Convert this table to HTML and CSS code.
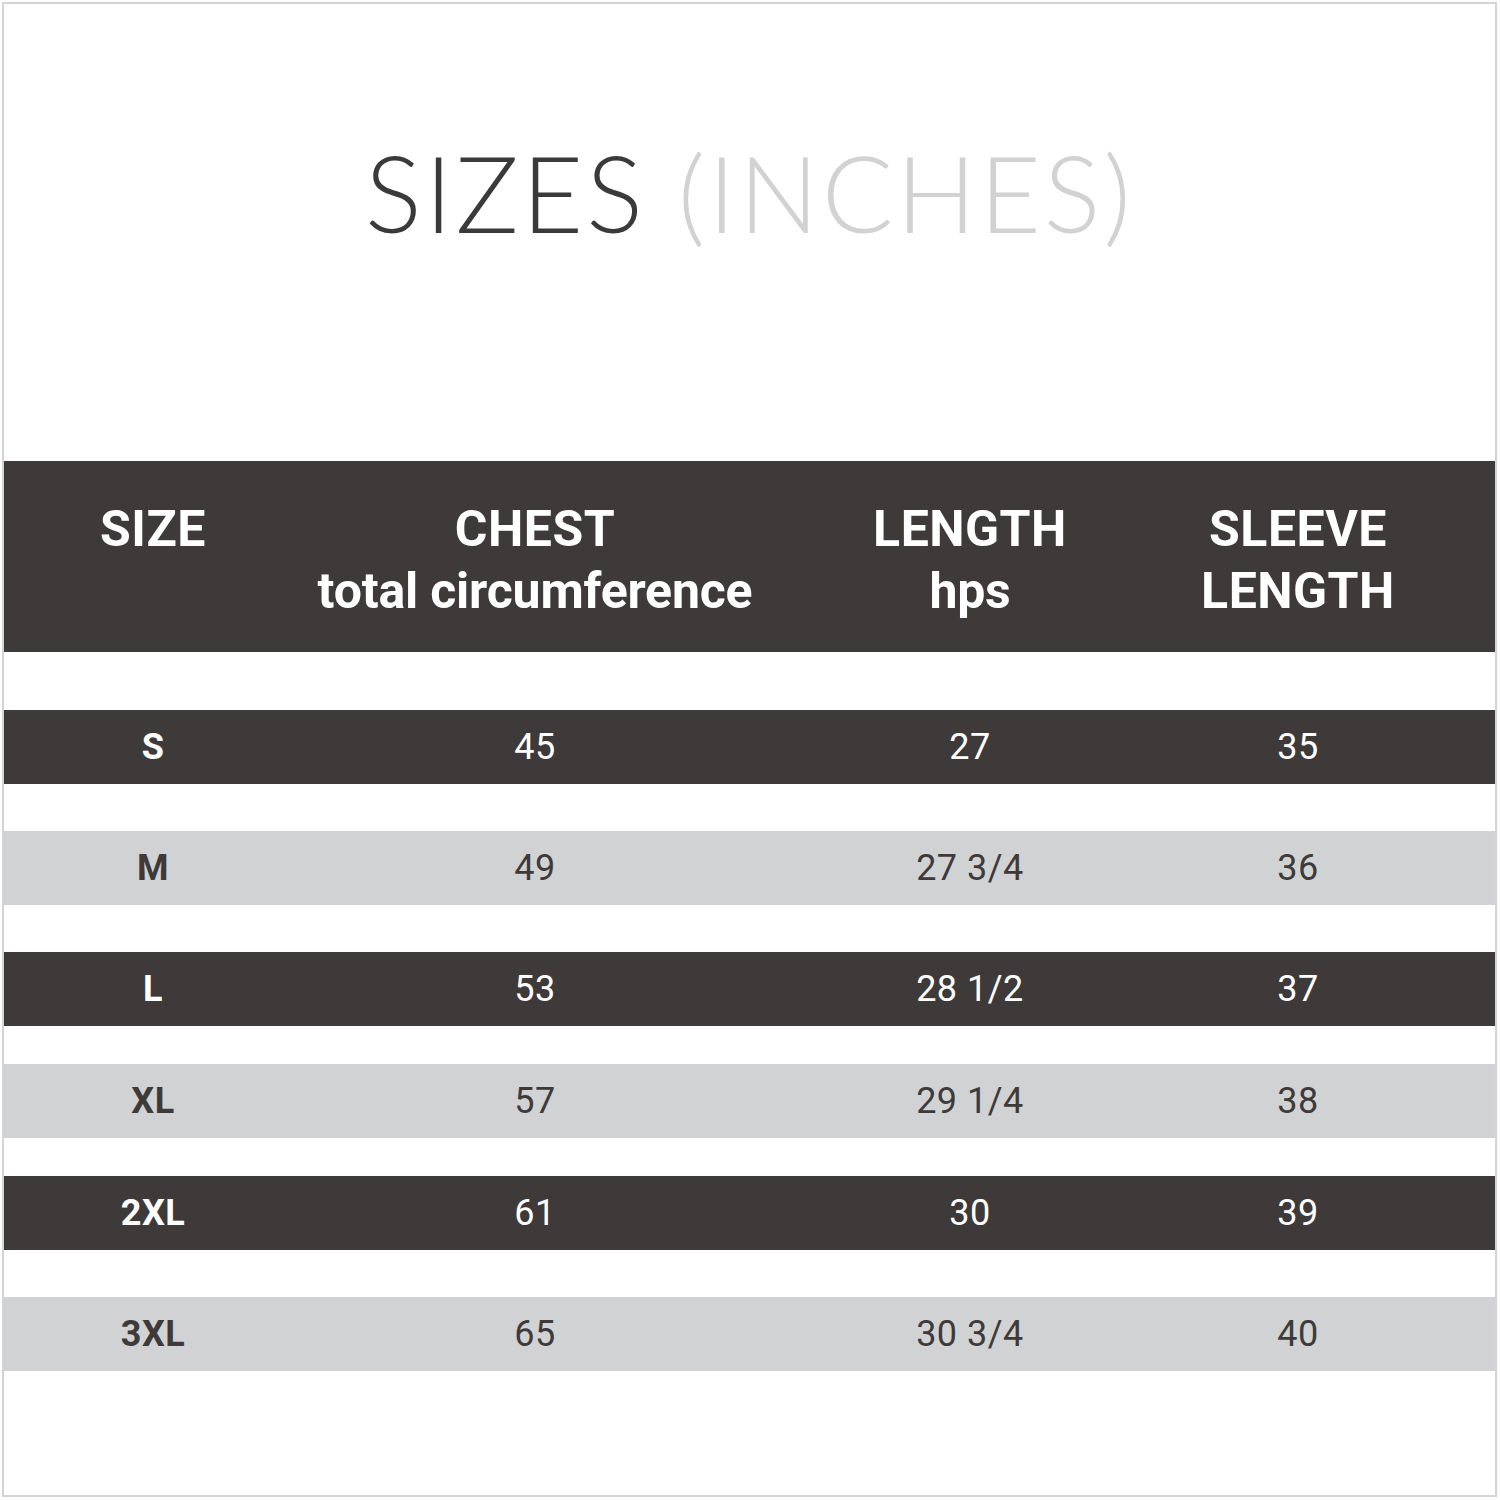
FILE: index.html
```html
<!DOCTYPE html>
<html lang="en">
<head>
<meta charset="utf-8">
<title>Sizes (Inches)</title>
<link rel="stylesheet" href="styles.css">
</head>
<body>
<div class="frame">
  <h1 class="title"><span class="title-main">SIZES</span> <span class="title-unit">(INCHES)</span></h1>
  <div class="chart">
    <div class="row head">
      <div class="cell">SIZE</div>
      <div class="cell">CHEST<br><span class="sub">total circumference</span></div>
      <div class="cell">LENGTH<br><span class="sub">hps</span></div>
      <div class="cell">SLEEVE<br>LENGTH</div>
    </div>
    <div class="row dark first">
      <div class="cell size">S</div><div class="cell">45</div><div class="cell">27</div><div class="cell">35</div>
    </div>
    <div class="row light">
      <div class="cell size">M</div><div class="cell">49</div><div class="cell">27 3/4</div><div class="cell">36</div>
    </div>
    <div class="row dark">
      <div class="cell size">L</div><div class="cell">53</div><div class="cell">28 1/2</div><div class="cell">37</div>
    </div>
    <div class="row light tight">
      <div class="cell size">XL</div><div class="cell">57</div><div class="cell">29 1/4</div><div class="cell">38</div>
    </div>
    <div class="row dark tight">
      <div class="cell size">2XL</div><div class="cell">61</div><div class="cell">30</div><div class="cell">39</div>
    </div>
    <div class="row light">
      <div class="cell size">3XL</div><div class="cell">65</div><div class="cell">30 3/4</div><div class="cell">40</div>
    </div>
  </div>
</div>
</body>
</html>
```

FILE: styles.css
```css
* { box-sizing: border-box; }
html, body { margin: 0; padding: 0; background: #ffffff; }
body { font-family: Roboto, "Liberation Sans", sans-serif; }

.frame {
  margin: 2px 0 0 2px;
  width: 1495px;
  height: 1495px;
  border: 2px solid #d4d4d4;
  background: #ffffff;
}

.title {
  margin: 0;
  padding-top: 135px;
  height: 457px;
  text-align: center;
  font-family: Lato, "Open Sans", sans-serif;
  font-weight: 300;
  font-size: 106px;
  line-height: 1;
  letter-spacing: 3px;
}
.title-main { color: #3a3a3a; }
.title-unit { color: #d2d2d2; }

.chart {
  display: flex;
  flex-direction: column;
  gap: 47px;
}

.row {
  display: grid;
  grid-template-columns: 298px 466px 404px 252px;
  text-align: center;
}

.head {
  height: 191px;
  background: #3e3a39;
  color: #ffffff;
  font-weight: 700;
  font-size: 50px;
  line-height: 62px;
  letter-spacing: 0.5px;
  padding-top: 37px;
  margin-bottom: 11px;
}
.head .sub { letter-spacing: -0.2px; }

.row.dark, .row.light {
  height: 74px;
  font-size: 36px;
  line-height: 74px;
  letter-spacing: 0.5px;
}
.row.dark { background: #3e3a39; color: #ffffff; }
.row.light { background: #d1d2d4; color: #3e3a39; }
.row.tight { margin-top: -9px; }

.cell.size { font-weight: 700; }
```
